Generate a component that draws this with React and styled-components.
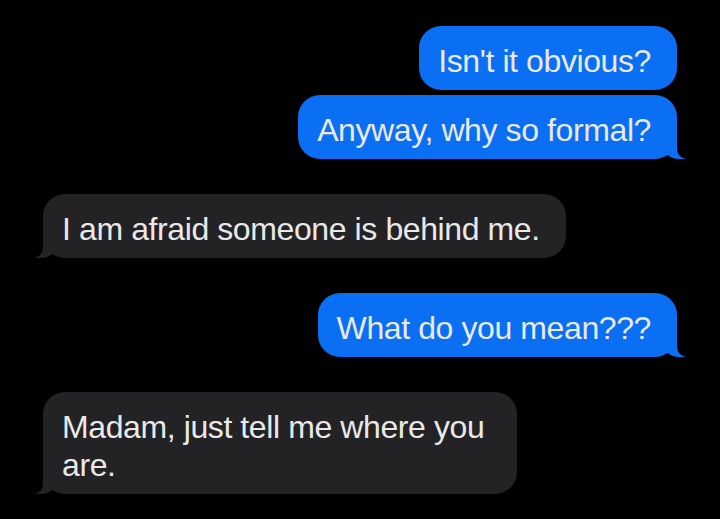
import React from "react";
import styled, { createGlobalStyle, css } from "styled-components";

const Global = createGlobalStyle`
  html, body { margin: 0; padding: 0; background: #000; }
  body { font-family: "Liberation Sans", Arial, sans-serif; }
`;

const Screen = styled.div`
  width: 720px;
  height: 519px;
  background: #000;
  box-sizing: border-box;
  padding: 26px 43px 0 43px;
  display: flex;
  flex-direction: column;
  overflow: hidden;
`;

const Group = styled.div`
  display: flex;
  flex-direction: column;
  align-items: ${(p) => (p.$me ? "flex-end" : "flex-start")};
  gap: 5px;
  & + & { margin-top: 35px; }
`;

const Bubble = styled.div`
  position: relative;
  box-sizing: border-box;
  max-width: ${(p) => p.$max || 526}px;
  padding: 16px 26px 10px 19px;
  border-radius: 22px;
  font-size: 32px;
  line-height: 38px;
  letter-spacing: -0.4px;
  color: #e9e9e9;
  background: ${(p) => (p.$me ? "#0a6ff2" : "#232326")};
  ${(p) =>
    p.$tail &&
    (p.$me
      ? css`
          &::before {
            content: "";
            position: absolute;
            bottom: 0;
            right: -8px;
            width: 22px;
            height: 22px;
            background: #0a6ff2;
            border-bottom-left-radius: 16px 14px;
          }
          &::after {
            content: "";
            position: absolute;
            bottom: 0;
            right: -26px;
            width: 26px;
            height: 24px;
            background: #000;
            border-bottom-left-radius: 10px;
          }
        `
      : css`
          &::before {
            content: "";
            position: absolute;
            bottom: 0;
            left: -8px;
            width: 22px;
            height: 22px;
            background: #232326;
            border-bottom-right-radius: 16px 14px;
          }
          &::after {
            content: "";
            position: absolute;
            bottom: 0;
            left: -26px;
            width: 26px;
            height: 24px;
            background: #000;
            border-bottom-right-radius: 10px;
          }
        `)}
`;

const Text = styled.span`
  position: relative;
  z-index: 1;
`;

const groups = [
  { me: true, msgs: [{ t: "Isn't it obvious?" }, { t: "Anyway, why so formal?" }] },
  { me: false, msgs: [{ t: "I am afraid someone is behind me." }] },
  { me: true, msgs: [{ t: "What do you mean???" }] },
  { me: false, msgs: [{ t: "Madam, just tell me where you are.", max: 474 }] },
];

export default function App() {
  return (
    <>
      <Global />
      <Screen>
        {groups.map((g, gi) => (
          <Group key={gi} $me={g.me}>
            {g.msgs.map((m, i) => (
              <Bubble key={i} $me={g.me} $max={m.max} $tail={i === g.msgs.length - 1}>
                <Text>{m.t}</Text>
              </Bubble>
            ))}
          </Group>
        ))}
      </Screen>
    </>
  );
}
